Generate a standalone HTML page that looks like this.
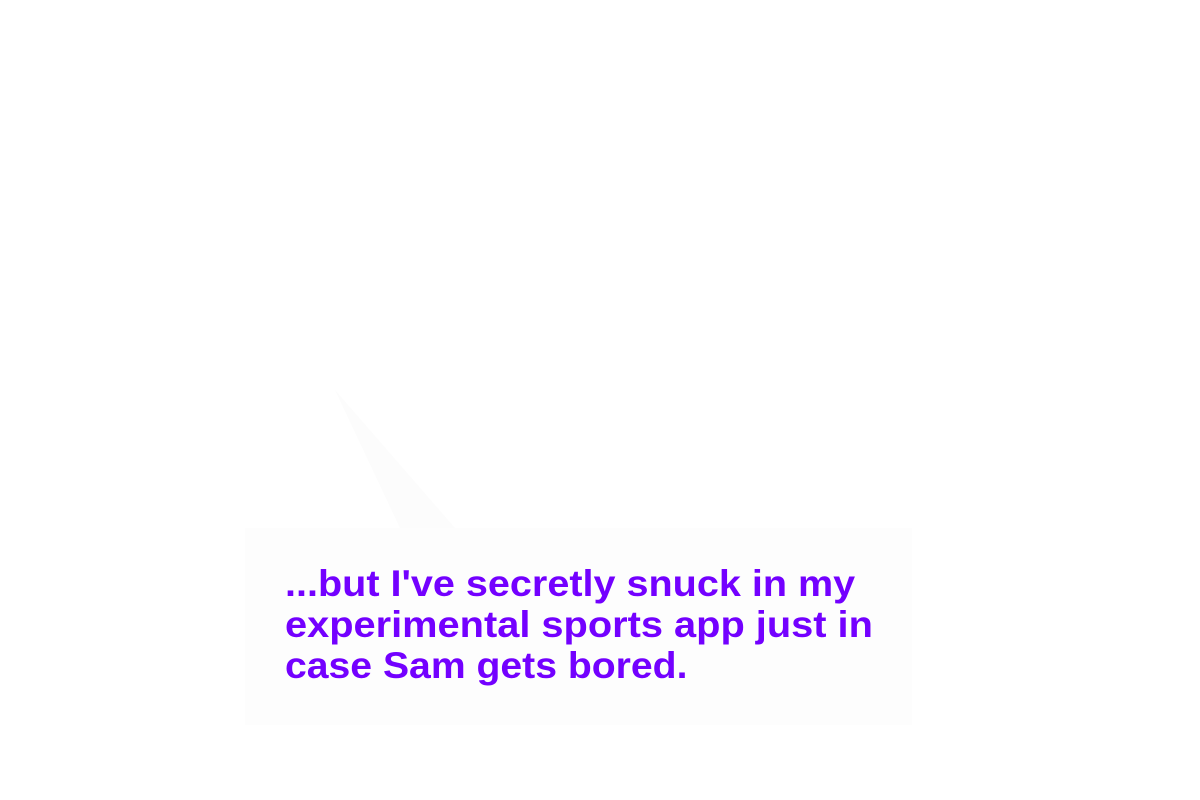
<!DOCTYPE html>
<html><head><style>
html,body{margin:0;padding:0;width:1200px;height:800px;background:#fff;overflow:hidden}
.box{position:absolute;left:245px;top:528px;width:667px;height:197px;background:#fdfdfd}
.tail{position:absolute;left:0;top:0}
.t{position:absolute;left:285px;font-family:"Liberation Sans",sans-serif;font-weight:bold;font-size:37px;color:#7300ff;white-space:nowrap;transform-origin:0 0;line-height:1}
</style></head><body>
<svg class="tail" width="1200" height="800"><polygon points="335,390 455,528 400,528" fill="#fcfcfc"/></svg>
<div class="box"></div>
<div class="t" id="l1" style="top:565px">...but I've secretly snuck in my</div>
<div class="t" id="l2" style="top:606px">experimental sports app just in</div>
<div class="t" id="l3" style="top:647px">case Sam gets bored.</div>
<script>
var w={l1:570,l2:588,l3:402};
for(var k in w){var e=document.getElementById(k);e.style.transform='scaleX('+(w[k]/e.offsetWidth)+')';}
</script>
</body></html>
